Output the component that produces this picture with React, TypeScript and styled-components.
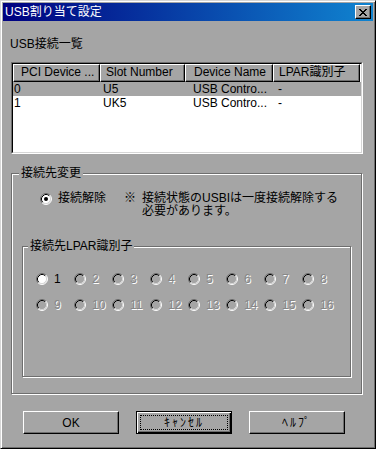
import styled, { createGlobalStyle } from 'styled-components';

const face = '#a5a5a5';
const shadow = '#6e6e6e';
const light = '#d6d6d6';
const font = `"Liberation Sans", "Noto Sans CJK JP", sans-serif`;

const GlobalStyle = createGlobalStyle`
  html, body {
    margin: 0;
    padding: 0;
    background: ${face};
  }
  body {
    font-family: ${font};
    font-size: 12px;
    line-height: 14px;
    color: #000;
  }
`;

const Window = styled.div`
  box-sizing: border-box;
  width: 376px;
  height: 449px;
  background: ${face};
  border: 1px solid;
  border-color: ${light} #000 #000 ${light};
  box-shadow: inset 1px 1px 0 #fff, inset -1px -1px 0 ${shadow};
  padding: 2px;
  display: flex;
  flex-direction: column;
`;

const TitleBar = styled.div`
  height: 18px;
  flex: none;
  display: flex;
  align-items: center;
  padding: 0 2px;
  background: linear-gradient(to right, #000080, #1084d0);
  color: #fff;
`;

const TitleText = styled.span`
  white-space: nowrap;
`;

const CloseButton = styled.div`
  box-sizing: border-box;
  margin-left: auto;
  width: 16px;
  height: 14px;
  background: ${face};
  border: 1px solid;
  border-color: #fff #000 #000 #fff;
  box-shadow: inset -1px -1px 0 ${shadow};
  display: flex;
  align-items: center;
  justify-content: center;
`;

const Body = styled.div`
  display: flex;
  flex-direction: column;
  padding: 0 10px 0 8px;
`;

const SectionLabel = styled.div`
  margin: 16px 0 0 -1px;
  height: 14px;
  white-space: nowrap;
`;

const ListFrame = styled.div`
  box-sizing: border-box;
  margin-top: 11px;
  height: 92px;
  border: 1px solid;
  border-color: ${shadow} #fff #fff ${shadow};
  display: flex;
`;

const ListInner = styled.div`
  flex: 1;
  border: 1px solid;
  border-color: #000 ${light} ${light} #000;
  background: #fff;
  overflow: hidden;
`;

const HeaderRow = styled.div`
  display: flex;
  height: 18px;
  background: ${face};
`;

const HeaderCell = styled.div<{ $width: number; $pad: number }>`
  box-sizing: border-box;
  flex: none;
  width: ${(p) => p.$width}px;
  border: 1px solid;
  border-color: #fff #000 #000 #fff;
  box-shadow: inset -1px -1px 0 ${shadow};
  padding-left: ${(p) => p.$pad}px;
  line-height: 15px;
  white-space: nowrap;
  overflow: hidden;
`;

const HeaderFill = styled.div`
  flex: 1;
  background: #fff;
`;

const Row = styled.div<{ $selected?: boolean }>`
  display: flex;
  height: 14px;
  background: ${(p) => (p.$selected ? face : 'transparent')};
`;

const Cell = styled.div<{ $width: number; $pad: number }>`
  box-sizing: border-box;
  flex: none;
  width: ${(p) => p.$width}px;
  padding-left: ${(p) => p.$pad}px;
  white-space: nowrap;
  overflow: hidden;
`;

const Group = styled.fieldset`
  box-sizing: border-box;
  margin: 0;
  min-width: 0;
  padding: 0;
  border: 1px solid ${shadow};
  box-shadow: inset 1px 1px 0 #fff, 1px 1px 0 #fff;
`;

const OuterGroup = styled(Group)`
  margin: 12px 1px 0 0;
  height: 228px;
`;

const InnerGroup = styled(Group)`
  margin: 21px 10px 0 10px;
  height: 138px;
`;

const Legend = styled.legend<{ $offset: number }>`
  margin-left: ${(p) => p.$offset}px;
  padding: 0 2px;
  background: ${face};
  line-height: 14px;
  white-space: nowrap;
`;

const OptionRow = styled.div`
  display: flex;
  align-items: flex-start;
  margin: 12px 0 0 28px;
  line-height: 13px;
`;

const RadioLabel = styled.label<{ $disabled?: boolean }>`
  display: flex;
  align-items: center;
  gap: 6px;
  white-space: nowrap;
  color: ${(p) => (p.$disabled ? '#878787' : '#000')};
  text-shadow: ${(p) => (p.$disabled ? '1px 1px 0 #fff' : 'none')};
`;

const Note = styled.div`
  display: grid;
  grid-template-columns: 18px auto;
  margin-left: 18px;
  white-space: nowrap;
`;

const LparGrid = styled.div`
  display: grid;
  grid-template-columns: repeat(8, 38px);
  row-gap: 12px;
  margin: 19px 0 0 13px;
  line-height: 14px;
`;

const ButtonRow = styled.div`
  display: flex;
  gap: 17px;
  margin-top: 17px;
  padding-left: 12px;
`;

const Button = styled.button<{ $default?: boolean; $kana?: boolean }>`
  box-sizing: border-box;
  width: 96px;
  height: 23px;
  padding: 0;
  font: inherit;
  letter-spacing: ${(p) => (p.$kana ? '2px' : 'normal')};
  color: #000;
  background: ${face};
  border: 1px solid;
  border-color: ${(p) => (p.$default ? '#000' : '#fff #000 #000 #fff')};
  box-shadow: ${(p) =>
    p.$default
      ? `inset 1px 1px 0 #fff, inset -1px -1px 0 #000, inset -2px -2px 0 ${shadow}`
      : `inset -1px -1px 0 ${shadow}`};
  outline: ${(p) => (p.$default ? '1px dotted #000' : 'none')};
  outline-offset: -5px;
`;

const columns = [
  { title: 'PCI Device ...', width: 87, headPad: 7, cellPad: 1 },
  { title: 'Slot Number', width: 85, headPad: 5, cellPad: 3 },
  { title: 'Device Name', width: 88, headPad: 8, cellPad: 8 },
  { title: 'LPAR識別子', width: 87, headPad: 5, cellPad: 5 },
];

const rows = [
  { values: ['0', 'U5', 'USB Contro...', '-'], selected: true },
  { values: ['1', 'UK5', 'USB Contro...', '-'], selected: false },
];

const xPattern = ['XX....XX', '.XX..XX.', '..XXXX..', '...XX...', '..XXXX..', '.XX..XX.', 'XX....XX'];
const xPath = xPattern
  .flatMap((line, y) => line.split('').map((c, x) => (c === 'X' ? `M${x} ${y}h1v1h-1z` : '')))
  .join('');

const CloseIcon = () => (
  <svg width="8" height="7" viewBox="0 0 8 7" shapeRendering="crispEdges">
    <path d={xPath} fill="#000" />
  </svg>
);

const Radio = (props: { checked?: boolean; disabled?: boolean }) => {
  const { checked, disabled } = props;
  return (
    <svg width="12" height="12" viewBox="0 0 12 12" style={{ flex: 'none' }}>
      <circle cx="6" cy="6" r="5" fill={disabled ? face : '#fff'} />
      <path d="M9.89 2.11A5.5 5.5 0 0 0 2.11 9.89" stroke={shadow} fill="none" />
      <path d="M9.89 2.11A5.5 5.5 0 0 1 2.11 9.89" stroke="#fff" fill="none" />
      <path d="M9.18 2.82A4.5 4.5 0 0 0 2.82 9.18" stroke="#000" fill="none" />
      <path d="M9.18 2.82A4.5 4.5 0 0 1 2.82 9.18" stroke={light} fill="none" />
      {checked && <circle cx="6" cy="6" r="2" fill="#000" />}
    </svg>
  );
};

const lpars = Array.from({ length: 16 }, (_, i) => i + 1);

export default function App() {
  return (
    <>
      <GlobalStyle />
      <Window>
        <TitleBar>
          <TitleText>USB割り当て設定</TitleText>
          <CloseButton>
            <CloseIcon />
          </CloseButton>
        </TitleBar>
        <Body>
          <SectionLabel>USB接続一覧</SectionLabel>
          <ListFrame>
            <ListInner>
              <HeaderRow>
                {columns.map((col) => (
                  <HeaderCell key={col.title} $width={col.width} $pad={col.headPad}>
                    {col.title}
                  </HeaderCell>
                ))}
                <HeaderFill />
              </HeaderRow>
              {rows.map((row) => (
                <Row key={row.values[0]} $selected={row.selected}>
                  {row.values.map((v, i) => (
                    <Cell key={i} $width={columns[i].width} $pad={columns[i].cellPad}>
                      {v}
                    </Cell>
                  ))}
                </Row>
              ))}
            </ListInner>
          </ListFrame>

          <OuterGroup>
            <Legend $offset={7}>接続先変更</Legend>
            <OptionRow>
              <RadioLabel>
                <Radio checked />
                接続解除
              </RadioLabel>
              <Note>
                <span>※</span>
                <span>
                  接続状態のUSBIは一度接続解除する
                  <br />
                  必要があります。
                </span>
              </Note>
            </OptionRow>
            <InnerGroup>
              <Legend $offset={5}>接続先LPAR識別子</Legend>
              <LparGrid>
                {lpars.map((n) => (
                  <RadioLabel key={n} $disabled={n !== 1}>
                    <Radio disabled={n !== 1} />
                    {n}
                  </RadioLabel>
                ))}
              </LparGrid>
            </InnerGroup>
          </OuterGroup>

          <ButtonRow>
            <Button>OK</Button>
            <Button $default $kana>
              ｷｬﾝｾﾙ
            </Button>
            <Button $kana>ﾍﾙﾌﾟ</Button>
          </ButtonRow>
        </Body>
      </Window>
    </>
  );
}
